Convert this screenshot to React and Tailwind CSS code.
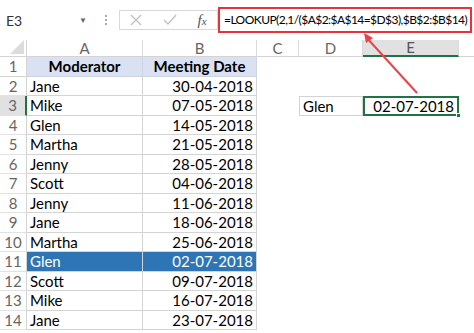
import React from 'react';

const rows = [
  ['Jane', '30-04-2018'],
  ['Mike', '07-05-2018'],
  ['Glen', '14-05-2018'],
  ['Martha', '21-05-2018'],
  ['Jenny', '28-05-2018'],
  ['Scott', '04-06-2018'],
  ['Jenny', '11-06-2018'],
  ['Jane', '18-06-2018'],
  ['Martha', '25-06-2018'],
  ['Glen', '02-07-2018'],
  ['Scott', '09-07-2018'],
  ['Mike', '16-07-2018'],
  ['Jane', '23-07-2018'],
];

const ColHead = ({ label, w, active }) => (
  <div
    className={`${w} h-full flex items-center justify-center border-r border-[#dadada] text-[15px] ${
      active ? 'bg-[#e1e1e1] border-b-2 border-b-[#217346] text-[#555]' : 'border-b border-b-[#d4d4d4] text-[#666]'
    }`}
  >
    {label}
  </div>
);

const App = () => {
  return (
    <div className="relative w-[474px] h-[333px] bg-white overflow-hidden font-['Lato',sans-serif] text-black">
      {/* formula bar */}
      <div className="h-[40px] flex items-center">
        <div className="ml-[3px] w-[89px] h-[22px] flex items-center justify-between px-[3px] text-[14px] text-[#333]">
          <span>E3</span>
          <span className="text-[8px] text-[#666] mr-[2px]">▼</span>
        </div>
        <div className="w-[27px] flex flex-col items-center gap-[2px]">
          <span className="w-[2px] h-[2px] bg-[#aaa]" />
          <span className="w-[2px] h-[2px] bg-[#aaa]" />
          <span className="w-[2px] h-[2px] bg-[#aaa]" />
        </div>
        <div className="w-[99px] h-[20px] border border-[#d9d9d9] flex items-center justify-around">
          <svg width="12" height="12" viewBox="0 0 12 12">
            <path d="M1 1L11 11M11 1L1 11" stroke="#c0c0c0" strokeWidth="1.3" fill="none" />
          </svg>
          <svg width="14" height="12" viewBox="0 0 14 12">
            <path d="M1 6L5 10L13 1" stroke="#c0c0c0" strokeWidth="1.3" fill="none" />
          </svg>
          <span className="font-['Liberation_Serif',serif] italic text-[15px] text-[#555]">
            f<span className="text-[11px]">x</span>
          </span>
        </div>
        <div className="w-[254px] h-[26px] border-2 border-[#e8323c] flex items-center pl-[4px] text-[12px] whitespace-nowrap tracking-[-0.55px]">
          =LOOKUP(2,1/($A$2:$A$14=$D$3),$B$2:$B$14)
        </div>
      </div>

      {/* column headers */}
      <div className="h-[17px] flex">
        <div className="w-[27px] h-full border-r border-b border-[#d4d4d4] flex items-end justify-end pr-[2px] pb-[2px]">
          <svg width="14" height="14" viewBox="0 0 14 14">
            <path d="M14 0L14 14L0 14Z" fill="#dcdcdc" />
          </svg>
        </div>
        <ColHead label="A" w="w-[116px]" />
        <ColHead label="B" w="w-[114px]" />
        <ColHead label="C" w="w-[42px]" />
        <ColHead label="D" w="w-[64px]" />
        <ColHead label="E" w="w-[96px]" active />
        <div className="flex-1 h-full border-b border-[#d4d4d4]" />
      </div>

      {/* body */}
      <div className="flex flex-col">
        <div className="h-[19.5px] flex">
          <div className="w-[27px] h-full flex items-center justify-center border-r border-b border-[#d4d4d4] text-[15px] text-[#666]">1</div>
          <div className="w-[116px] h-full flex items-center justify-center bg-[#d9e1f2] border-r border-b border-[#cfd5e0] text-[15px] font-bold">Moderator</div>
          <div className="w-[114px] h-full flex items-center justify-center bg-[#d9e1f2] border-r border-b border-[#cfd5e0] text-[15px] font-bold">Meeting Date</div>
        </div>
        {rows.map(([name, date], i) => {
          const n = i + 2;
          const sel = n === 11;
          const cur = n === 3;
          return (
            <div key={n} className="h-[19.5px] flex">
              <div
                className={`w-[27px] h-full flex items-center justify-center border-b border-[#e2e2e2] text-[15px] text-[#666] ${
                  cur ? 'bg-[#e1e1e1] border-r-2 border-r-[#217346]' : 'border-r border-r-[#d4d4d4]'
                }`}
              >
                {n}
              </div>
              <div
                className={`w-[116px] h-full flex items-center px-[3px] border-r border-b border-[#d4d4d4] text-[15px] ${
                  sel ? 'bg-[#2e75b6] text-white' : ''
                }`}
              >
                {name}
              </div>
              <div
                className={`w-[114px] h-full flex items-center justify-end px-[3px] border-r border-b border-[#d4d4d4] text-[15px] ${
                  sel ? 'bg-[#2e75b6] text-white' : ''
                }`}
              >
                {date}
              </div>
              {cur && (
                <>
                  <div className="w-[42px] h-full" />
                  <div className="w-[64px] h-full flex items-center px-[3px] border border-[#d4d4d4] text-[15px]">Glen</div>
                  <div className="relative w-[96px] h-full flex items-center justify-end px-[3px] border-2 border-[#217346] text-[15px]">
                    02-07-2018
                    <span className="absolute right-[-4px] bottom-[-4px] w-[5px] h-[5px] bg-[#217346] border border-white" />
                  </div>
                </>
              )}
            </div>
          );
        })}
      </div>

      {/* arrow */}
      <svg className="absolute left-0 top-0 pointer-events-none" width="474" height="333">
        <line x1="417" y1="93" x2="366" y2="37" stroke="#e8434a" strokeWidth="2" />
        <path d="M364 33L373 38L366 43Z" fill="#e8434a" />
      </svg>
    </div>
  );
};

export default App;
